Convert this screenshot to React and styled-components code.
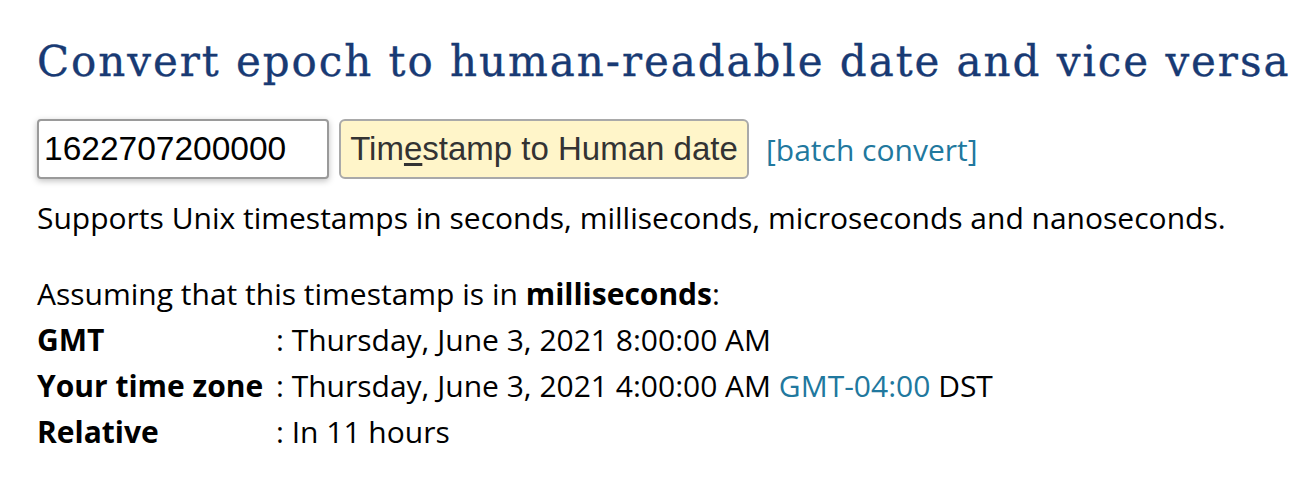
import React from 'react'
import styled, { createGlobalStyle } from 'styled-components'

const GlobalStyle = createGlobalStyle`
  html, body {
    margin: 0;
    padding: 0;
    background: #fff;
  }
  body {
    font-family: "Open Sans", "DejaVu Sans", sans-serif;
    color: #000;
  }
`

const rows = [
  { label: 'GMT', value: 'Thursday, June 3, 2021 8:00:00 AM' },
  { label: 'Your time zone', value: 'Thursday, June 3, 2021 4:00:00 AM', zone: 'GMT-04:00', suffix: 'DST' },
  { label: 'Relative', value: 'In 11 hours' },
]

export default function App() {
  return (
    <>
      <GlobalStyle />
      <Page>
        <Title>Convert epoch to human-readable date and vice versa</Title>
        <Form>
          <EpochInput defaultValue="1622707200000" />
          <ConvertButton>Tim<u>e</u>stamp to Human date</ConvertButton>
          <TextLink href="#">[batch convert]</TextLink>
        </Form>
        <Note>Supports Unix timestamps in seconds, milliseconds, microseconds and nanoseconds.</Note>
        <Result>
          <Assume>Assuming that this timestamp is in <b>milliseconds</b>:</Assume>
          <Table>
            {rows.map((r) => (
              <React.Fragment key={r.label}>
                <Label>{r.label}</Label>
                <Value>
                  : {r.value}
                  {r.zone && <> <TextLink href="#">{r.zone}</TextLink> {r.suffix}</>}
                </Value>
              </React.Fragment>
            ))}
          </Table>
        </Result>
      </Page>
    </>
  )
}

/* STYLES */
const Page = styled.main`
  padding: 34px 0 0 37px;
`

const Title = styled.h1`
  margin: 0;
  font-family: "DejaVu Serif", serif;
  font-weight: 400;
  font-size: 42px;
  line-height: 56px;
  letter-spacing: 1.95px;
  -webkit-text-stroke: 0.35px #183a74;
  color: #183a74;
  white-space: nowrap;
`

const Form = styled.div`
  display: flex;
  align-items: center;
  margin-top: 29px;
`

const EpochInput = styled.input`
  box-sizing: border-box;
  width: 292px;
  height: 60px;
  padding: 0 5px;
  border: 2px solid #9a9a9a;
  border-radius: 4px;
  box-shadow: 0 2px 6px rgba(0, 0, 0, 0.25);
  font-family: "Liberation Sans", Arial, sans-serif;
  font-size: 33.5px;
  color: #000;
  outline: none;
`

const ConvertButton = styled.button`
  box-sizing: border-box;
  width: 410px;
  height: 60px;
  margin-left: 10px;
  padding: 0;
  background: #fff5c9;
  border: 2px solid #a9a9a9;
  border-radius: 6px;
  font-family: "Liberation Sans", Arial, sans-serif;
  font-size: 33px;
  color: #333;
  u {
    text-underline-offset: 3px;
  }
`

const TextLink = styled.a`
  color: #21789e;
  text-decoration: none;
  font-family: "Open Sans", sans-serif;
  ${Form} > & {
    margin-left: 17px;
    font-size: 30px;
  }
`

const Note = styled.p`
  margin: 19px 0 0;
  font-size: 30px;
  line-height: 40px;
`

const Result = styled.div`
  margin-top: 33px;
  font-size: 30px;
`

const Assume = styled.div`
  line-height: 45px;
`

const Table = styled.div`
  display: grid;
  grid-template-columns: 239px auto;
  grid-auto-rows: 46px;
  align-items: center;
  justify-content: start;
`

const Label = styled.div`
  font-weight: 700;
  white-space: nowrap;
`

const Value = styled.div`
  white-space: nowrap;
`
